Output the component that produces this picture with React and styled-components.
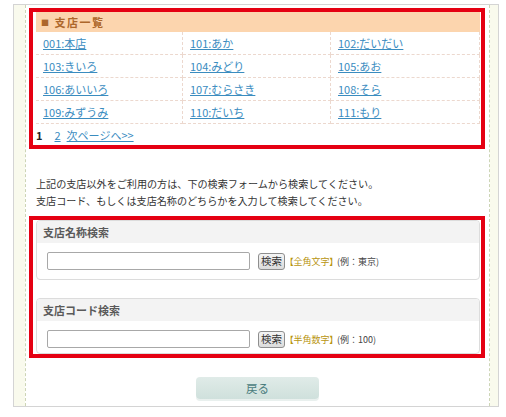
import React from 'react';
import styled, { createGlobalStyle } from 'styled-components';

const GlobalStyle = createGlobalStyle`
  body {
    margin: 0;
    background: #fff;
    font-family: "Noto Sans CJK JP", "Noto Sans", sans-serif;
    color: #333;
  }
`;

const Frame = styled.div`
  box-sizing: border-box;
  width: 486px;
  margin: 4px 0 0 13px;
  border: 1px solid #d4d4d4;
  background: #f9faed;
`;

const Column = styled.div`
  margin: 0 8px 0 11px;
  border-left: 1px dashed #cdd5b6;
  border-right: 1px dashed #cdd5b6;
  background: #fff;
  padding: 3px 0 7px;
  display: flex;
  flex-direction: column;
`;

const Marked = styled.div`
  margin: ${(p) => p.$top || 0}px 4px 0 3px;
  border: 4px solid #e50012;
  padding: 0 1px ${(p) => p.$bottom || 0}px 3px;
  background: #fff;
`;

const ListHead = styled.div`
  height: 20px;
  background: #fcd5ae;
  display: flex;
  align-items: center;
  padding-left: 5px;
  font-size: 11px;
  font-weight: bold;
  letter-spacing: 1.5px;
  color: #ad672b;
`;

const Square = styled.span`
  font-size: 8px;
  margin-right: 4px;
`;

const Grid = styled.div`
  display: grid;
  grid-template-columns: 147px 148px 149px;
`;

const Cell = styled.div`
  box-sizing: border-box;
  height: 23px;
  display: flex;
  align-items: center;
  padding-left: 7px;
  border-bottom: 1px dashed #ecd8ce;
  border-right: 1px dashed #ecd8ce;
`;

const Link = styled.a`
  font-size: 11px;
  color: #3a8cbf;
  text-decoration: underline;
  cursor: pointer;
`;

const Pager = styled.div`
  height: 21px;
  display: flex;
  align-items: center;
  font-size: 11px;
`;

const Current = styled.b`
  color: #222;
  margin-right: 12px;
`;

const PageLink = styled(Link)`
  margin-right: 6px;
`;

const Note = styled.p`
  margin: 26px 0 0;
  padding-left: 10px;
  font-size: 10.1px;
  line-height: 17px;
  color: #333;
`;

const Panel = styled.div`
  border: 1px solid #dcdcdc;
  border-radius: 4px;
  overflow: hidden;
  margin-top: ${(p) => p.$gap || 0}px;
`;

const PanelHead = styled.div`
  height: 22px;
  background: #f3f3f3;
  display: flex;
  align-items: center;
  padding-left: 6px;
  font-size: 11px;
  font-weight: bold;
  color: #5a5a5a;
`;

const PanelBody = styled.div`
  display: flex;
  align-items: center;
  padding: 9px 10px ${(p) => p.$bottom}px;
`;

const Field = styled.input`
  box-sizing: border-box;
  width: 203px;
  height: 18px;
  border: 1px solid #a8a8a8;
  border-radius: 2px;
  margin: 0;
`;

const SearchButton = styled.button`
  box-sizing: border-box;
  width: 27px;
  height: 17px;
  margin-left: 8px;
  padding: 0;
  border: 1px solid #8e8e8e;
  border-radius: 3px;
  background: linear-gradient(#f5f5f5, #dcdcdc);
  font-family: "Noto Sans CJK JP", sans-serif;
  font-size: 10.5px;
  line-height: 14px;
  color: #333;
`;

const Hint = styled.span`
  margin-left: 4px;
  font-size: 9px;
  color: #444;
`;

const Kind = styled.span`
  font-feature-settings: "palt";
  color: #b8940e;
  margin-right: 3px;
`;

const BackButton = styled.button`
  align-self: center;
  box-sizing: border-box;
  width: 123px;
  height: 22px;
  margin-top: 19px;
  border: none;
  border-radius: 4px;
  background: linear-gradient(#e0ebe8, #cfe0dc);
  box-shadow: 0 2px 0 #e9f0ee;
  font-family: "Noto Sans CJK JP", sans-serif;
  font-size: 11.5px;
  color: #4a7c7d;
`;

const branches = [
  '001:本店', '101:あか', '102:だいだい',
  '103:きいろ', '104:みどり', '105:あお',
  '106:あいいろ', '107:むらさき', '108:そら',
  '109:みずうみ', '110:だいち', '111:もり',
];

const searches = [
  { title: '支店名称検索', kind: '【全角文字】', example: '(例：東京)', bottom: 9 },
  { title: '支店コード検索', kind: '【半角数字】', example: '(例：100)', bottom: 5, gap: 18 },
];

export default () => (
  <>
    <GlobalStyle />
    <Frame>
      <Column>
        <Marked $top={0}>
          <ListHead>
            <Square>■</Square>
            支店一覧
          </ListHead>
          <Grid>
            {branches.map((b) => (
              <Cell key={b}>
                <Link>{b}</Link>
              </Cell>
            ))}
          </Grid>
          <Pager>
            <Current>1</Current>
            <PageLink>2</PageLink>
            <Link>次ページへ&gt;&gt;</Link>
          </Pager>
        </Marked>
        <Note>
          上記の支店以外をご利用の方は、下の検索フォームから検索してください。
          <br />
          支店コード、もしくは支店名称のどちらかを入力して検索してください。
        </Note>
        <Marked $top={7}>
          {searches.map((s) => (
            <Panel key={s.title} $gap={s.gap}>
              <PanelHead>{s.title}</PanelHead>
              <PanelBody $bottom={s.bottom}>
                <Field type="text" />
                <SearchButton>検索</SearchButton>
                <Hint>
                  <Kind>{s.kind}</Kind>
                  {s.example}
                </Hint>
              </PanelBody>
            </Panel>
          ))}
        </Marked>
        <BackButton>戻る</BackButton>
      </Column>
    </Frame>
  </>
);
